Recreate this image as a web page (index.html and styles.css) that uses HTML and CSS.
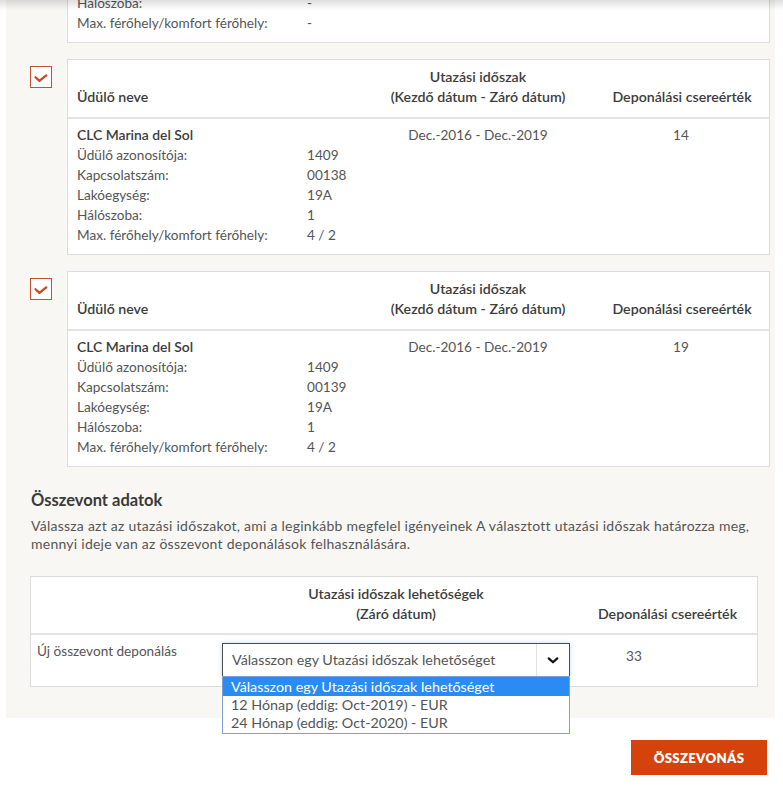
FILE: index.html
```html
<!DOCTYPE html>
<html lang="hu">
<head>
<meta charset="utf-8">
<title>Összevonás</title>
<link rel="stylesheet" href="styles.css">
</head>
<body>
<div class="top-shadow"></div>
<div class="panel">
  <div class="item first">
    <span class="checkbox"><svg viewBox="0 0 22 22" width="20" height="20"><polyline points="5,11.3 9.3,15.2 16.8,9.2" fill="none" stroke="#c9471f" stroke-width="2.5" stroke-linecap="round" stroke-linejoin="round"/></svg></span>
    <div class="card">
      <div class="card-head">
        <div class="h1">Üdülő neve</div>
        <div class="h2">Utazási időszak<br>(Kezdő dátum - Záró dátum)</div>
        <div class="h3">Deponálási csereérték</div>
      </div>
      <div class="card-body">
        <div class="c1">
          <div class="name">CLC Marina del Sol</div>
          <div class="kv"><span>Üdülő azonosítója:</span><span>-</span></div>
          <div class="kv"><span>Kapcsolatszám:</span><span>-</span></div>
          <div class="kv"><span>Lakóegység:</span><span>-</span></div>
          <div class="kv"><span>Hálószoba:</span><span>-</span></div>
          <div class="kv"><span>Max. férőhely/komfort férőhely:</span><span>-</span></div>
        </div>
        <div class="c2">Dec.-2016 - Dec.-2019</div>
        <div class="c3">12</div>
      </div>
    </div>
  </div>

  <div class="item">
    <span class="checkbox"><svg viewBox="0 0 22 22" width="20" height="20"><polyline points="5,11.3 9.3,15.2 16.8,9.2" fill="none" stroke="#c9471f" stroke-width="2.5" stroke-linecap="round" stroke-linejoin="round"/></svg></span>
    <div class="card">
      <div class="card-head">
        <div class="h1">Üdülő neve</div>
        <div class="h2">Utazási időszak<br>(Kezdő dátum - Záró dátum)</div>
        <div class="h3">Deponálási csereérték</div>
      </div>
      <div class="card-body">
        <div class="c1">
          <div class="name">CLC Marina del Sol</div>
          <div class="kv"><span>Üdülő azonosítója:</span><span>1409</span></div>
          <div class="kv"><span>Kapcsolatszám:</span><span>00138</span></div>
          <div class="kv"><span>Lakóegység:</span><span>19A</span></div>
          <div class="kv"><span>Hálószoba:</span><span>1</span></div>
          <div class="kv"><span>Max. férőhely/komfort férőhely:</span><span>4 / 2</span></div>
        </div>
        <div class="c2">Dec.-2016 - Dec.-2019</div>
        <div class="c3">14</div>
      </div>
    </div>
  </div>

  <div class="item">
    <span class="checkbox"><svg viewBox="0 0 22 22" width="20" height="20"><polyline points="5,11.3 9.3,15.2 16.8,9.2" fill="none" stroke="#c9471f" stroke-width="2.5" stroke-linecap="round" stroke-linejoin="round"/></svg></span>
    <div class="card">
      <div class="card-head">
        <div class="h1">Üdülő neve</div>
        <div class="h2">Utazási időszak<br>(Kezdő dátum - Záró dátum)</div>
        <div class="h3">Deponálási csereérték</div>
      </div>
      <div class="card-body">
        <div class="c1">
          <div class="name">CLC Marina del Sol</div>
          <div class="kv"><span>Üdülő azonosítója:</span><span>1409</span></div>
          <div class="kv"><span>Kapcsolatszám:</span><span>00139</span></div>
          <div class="kv"><span>Lakóegység:</span><span>19A</span></div>
          <div class="kv"><span>Hálószoba:</span><span>1</span></div>
          <div class="kv"><span>Max. férőhely/komfort férőhely:</span><span>4 / 2</span></div>
        </div>
        <div class="c2">Dec.-2016 - Dec.-2019</div>
        <div class="c3">19</div>
      </div>
    </div>
  </div>

  <section class="merge">
    <h2 class="merge-title">Összevont adatok</h2>
    <p class="merge-text">Válassza azt az utazási időszakot, ami a leginkább megfelel igényeinek A választott utazási időszak határozza meg, mennyi ideje van az összevont deponálások felhasználására.</p>
    <div class="mtable">
      <div class="mhead">
        <div class="m1"></div>
        <div class="m2">Utazási időszak lehetőségek<br>(Záró dátum)</div>
        <div class="m3">Deponálási csereérték</div>
      </div>
      <div class="mrow">
        <div class="m1 label">Új összevont deponálás</div>
        <div class="m2">
          <div class="select">
            <span class="select-text">Válasszon egy Utazási időszak lehetőséget</span>
            <span class="select-btn"><svg viewBox="0 0 14 10" width="12" height="9"><polyline points="2,2.5 7,7 12,2.5" fill="none" stroke="#111" stroke-width="2.6" stroke-linecap="round" stroke-linejoin="round"/></svg></span>
            <ul class="options">
              <li class="active">Válasszon egy Utazási időszak lehetőséget</li>
              <li>12 Hónap (eddig: Oct-2019) - EUR</li>
              <li>24 Hónap (eddig: Oct-2020) - EUR</li>
            </ul>
          </div>
        </div>
        <div class="m3 val">33</div>
      </div>
    </div>
  </section>
</div>
<div class="actions">
  <button class="btn">ÖSSZEVONÁS</button>
</div>
</body>
</html>
```

FILE: styles.css
```css
* { box-sizing: border-box; }
html, body { margin: 0; padding: 0; }
body {
  background: #fff;
  font-family: Lato, "Open Sans", "DejaVu Sans", sans-serif;
  font-size: 13.6px;
  color: #555;
  overflow: hidden;
}
.top-shadow {
  position: fixed;
  left: 0; right: 0; top: 0;
  height: 10px;
  background: linear-gradient(to bottom, rgba(0,0,0,0.13), rgba(0,0,0,0));
  z-index: 5;
  pointer-events: none;
}
.panel {
  background: #f8f7f4;
  margin: 0 8px 0 6px;
  padding: 0 5px 31px 24px;
}
.item {
  display: flex;
  align-items: flex-start;
  gap: 15px;
  margin-bottom: 16px;
}
.item.first { margin-top: -153px; }
.checkbox {
  flex: none;
  width: 22px;
  height: 22px;
  margin-top: 7px;
  border: 1.5px solid #c9502e;
  background: #fff;
  display: flex;
  align-items: center;
  justify-content: center;
}
.card {
  flex: 1;
  background: #fff;
  border: 1px solid #dcdcdc;
}
.card-head, .card-body {
  display: grid;
  grid-template-columns: 306px 190px 1fr;
  line-height: 20px;
  white-space: nowrap;
}
.card-head {
  padding: 7px 0 10px 9px;
  border-bottom: 2px solid #e3e3e3;
  align-items: end;
  color: #3c3c3c;
  font-weight: 600;
  font-size: 14.2px;
}
.card-body { padding: 6px 0 9px 9px; }
.h2, .c2 { text-align: center; }
.h3, .c3 { text-align: center; padding-left: 22px; }
.c3 { padding-left: 20px; }
.name { color: #3c3c3c; font-weight: 600; font-size: 13.9px; }
.kv { display: flex; }
.kv span:first-child { width: 230px; flex: none; }

.merge { margin: 23px 12px 0 1px; }
.merge-title {
  margin: 0 0 7px;
  font-size: 16.5px;
  line-height: 20px;
  font-weight: 700;
  color: #3a3a3a;
}
.merge-text {
  margin: 0 0 23px;
  line-height: 18px;
  font-size: 14px;
  letter-spacing: 0.25px;
  color: #555;
}
.mtable {
  margin-left: -1px;
  background: #fff;
  border: 1px solid #dcdcdc;
}
.mhead, .mrow {
  display: grid;
  grid-template-columns: 191px 348px 1fr;
  line-height: 20px;
  white-space: nowrap;
}
.mhead {
  padding: 7px 0 9px;
  border-bottom: 2px solid #e3e3e3;
  align-items: end;
  color: #3c3c3c;
  font-weight: 600;
  font-size: 14.2px;
}
.mhead .m2 { text-align: center; }
.mhead .m3 { text-align: center; padding-left: 8px; }
.mrow { padding: 8px 0 9px; }
.label { padding-left: 6px; margin-top: -2px; }
.val { padding-left: 56px; padding-top: 3px; }
.select {
  position: relative;
  height: 34px;
  border: 1px solid #4d4d4d;
  background: #fff;
  display: flex;
  align-items: center;
  box-shadow: 0 0 4px rgba(70,140,230,0.35);
}
.select-text {
  flex: 1;
  padding-left: 9px;
  font-size: 14.3px;
  color: #555;
}
.select-btn {
  flex: none;
  width: 33px;
  height: 100%;
  border-left: 1px solid #e2e2e2;
  display: flex;
  align-items: center;
  justify-content: center;
}
.options {
  position: absolute;
  left: -1px;
  right: -1px;
  top: 32px;
  margin: 0;
  padding: 0 0 1px;
  list-style: none;
  background: #fff;
  border: 1px solid #7f9fd8;
  z-index: 3;
  font-size: 14.3px;
}
.options li {
  height: 18px;
  line-height: 18px;
  padding-left: 8px;
  color: #555;
}
.options li.active {
  height: 19px;
  line-height: 19px;
  background: #2a8bf2;
  color: #fff;
}
.actions {
  display: flex;
  justify-content: flex-end;
  padding: 22px 16px 0 0;
}
.btn {
  width: 136px;
  height: 35px;
  border: 0;
  background: #d5420c;
  color: #fff;
  font-family: Lato, "Open Sans", sans-serif;
  font-weight: 800;
  font-size: 13.2px;
  letter-spacing: 0.3px;
}
```
